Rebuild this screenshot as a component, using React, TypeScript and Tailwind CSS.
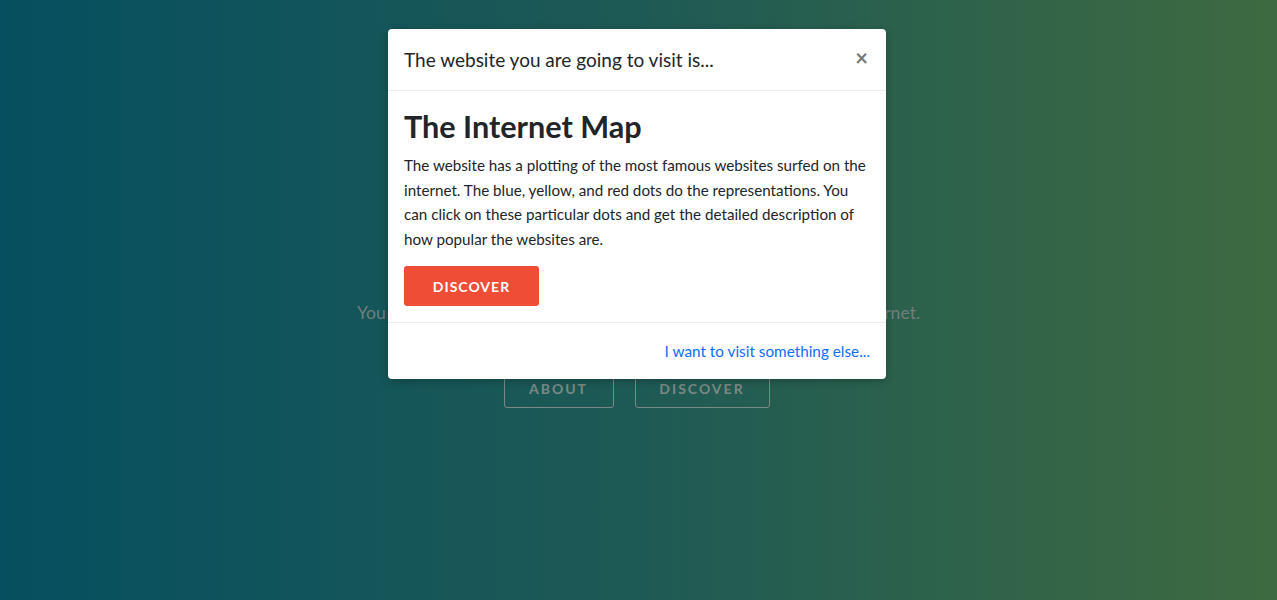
import React from "react";

export default function App() {
  return (
    <div
      className="relative w-full h-[600px] overflow-hidden bg-[linear-gradient(90deg,#064f60_0%,#1e5a55_50%,#3e6a40_100%)]"
      style={{ fontFamily: "Lato, 'Noto Sans', sans-serif" }}
    >
      <div className="flex flex-col items-center pt-[300px]">
        <p className="text-[17.6px] text-[#6f7f7c] leading-[26px]">
          You can discover the most useful and fun websites on the whole internet.
        </p>
        <div className="flex gap-[21px] mt-[42px] -ml-[4px]">
          <div className="w-[110px] h-[40px] border border-[#7b8985] rounded-[3px] flex items-center justify-center text-[14px] font-bold tracking-[2px] text-[#7b8985]">
            ABOUT
          </div>
          <div className="w-[135px] h-[40px] border border-[#7b8985] rounded-[3px] flex items-center justify-center text-[14px] font-bold tracking-[2px] text-[#7b8985]">
            DISCOVER
          </div>
        </div>
      </div>

      <div className="absolute left-[388px] top-[29px] w-[498px] bg-white rounded-[4px] shadow-[0_2px_8px_rgba(0,0,0,0.25)]">
        <div className="flex items-center justify-between px-4 h-[62px] border-b border-[#e9ecef]">
          <h5 className="text-[19px] text-[#212529] leading-[30px]">The website you are going to visit is...</h5>
          <span className="text-[22px] font-bold text-[#777] leading-none mr-[2px] -mt-[4px]">×</span>
        </div>
        <div className="px-4 pt-[18px] pb-4 border-b border-[#e9ecef]">
          <h2 className="text-[30.6px] font-bold text-[#212529] leading-[36px] mb-[8px]">The Internet Map</h2>
          <p className="text-[15.2px] text-[#212529] leading-[24.5px] mb-[15px]">
            The website has a plotting of the most famous websites surfed on the internet. The blue, yellow, and red dots do the representations. You can click on these particular dots and get the detailed description of how popular the websites are.
          </p>
          <div className="w-[135px] h-[40px] bg-[#f04d37] rounded-[3px] flex items-center justify-center text-white text-[14px] font-bold tracking-[1px]">
            DISCOVER
          </div>
        </div>
        <div className="flex justify-end items-center px-4 h-[56px]">
          <a className="text-[15.3px] text-[#0d6efd]">I want to visit something else...</a>
        </div>
      </div>
    </div>
  );
}
